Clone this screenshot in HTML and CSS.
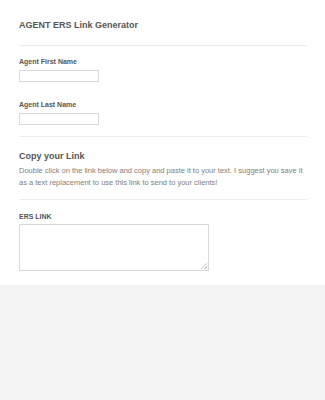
FILE: index.html
```html
<!DOCTYPE html>
<html lang="en">
  <head>
    <meta charset="UTF-8" />
    <meta name="viewport" content="width=device-width, initial-scale=1.0" />
    <title>AGENT ERS Link Generator</title>
    <link rel="stylesheet" href="styles.css">
  </head>
  <body>
    <div class="form-all">
      <div class="form-section">
        <h1 class="form-header">AGENT ERS Link Generator</h1>
        <hr class="divider" />

        <div class="form-line">
          <label class="form-label" for="first_name">Agent First Name</label>
          <input type="text" class="form-textbox" id="first_name" />
        </div>

        <div class="form-line form-line-next">
          <label class="form-label" for="last_name">Agent Last Name</label>
          <input type="text" class="form-textbox" id="last_name" />
        </div>

        <hr class="divider" />

        <!--copy link---------------------------------------------------->
        <div class="form-subheader">
          <h2>Copy your Link</h2>
          <p>
            Double click on the link below and copy and paste it to your text. I suggest you save it
            as a text replacement to use this link to send to your clients!
          </p>
        </div>

        <hr class="divider" />

        <div class="form-line form-line-last">
          <label class="form-label form-label-tight" for="ers_link">ERS LINK</label>
          <textarea class="form-textarea" id="ers_link"></textarea>
        </div>
      </div>
    </div>
  </body>
</html>
```

FILE: styles.css
```css
html,
body {
  margin: 0;
  padding: 0;
  background: #f3f3f3;
}
body {
  font-family: "Liberation Sans", arial, sans-serif;
  color: #555;
}
.form-all {
  background: #fff;
  padding: 0 18px 14px 19px;
}
.form-section {
  display: flex;
  flex-direction: column;
  padding-top: 18px;
}
.form-header {
  margin: 0;
  font-size: 9px;
  font-weight: 700;
  line-height: 14px;
  color: #555;
}

/* dividers and the space round them */
.divider {
  width: 100%;
  border: 0;
  border-top: 1px solid #ececec;
  margin: 13px 0 0;
}
.divider + .form-line {
  margin-top: 11px;
}
.form-line.form-line-next {
  margin-top: 18px;
}
.form-line-next + .divider {
  margin-top: 11px;
}
.divider + .form-subheader {
  margin-top: 12px;
}
.form-subheader + .divider {
  margin-top: 10px;
}
.divider + .form-line-last {
  margin-top: 12px;
}

/* fields */
.form-line {
  display: flex;
  flex-direction: column;
  align-items: flex-start;
}
.form-label {
  font-size: 7px;
  font-weight: 700;
  line-height: 10px;
  margin-bottom: 3px;
}
.form-label-tight {
  margin-bottom: 2px;
}
.form-textbox {
  box-sizing: border-box;
  width: 80px;
  height: 12px;
  border: 1px solid #d9d9d9;
  padding: 0;
  margin: 0;
  background: #fff;
}
.form-textarea {
  box-sizing: border-box;
  width: 190px;
  height: 47px;
  border: 1px solid #d9d9d9;
  padding: 0;
  margin: 0;
  resize: none;
  background: #fff
    linear-gradient(
      135deg,
      transparent 0 45%,
      #c8c8c8 45% 58%,
      transparent 58% 72%,
      #c8c8c8 72% 85%,
      transparent 85%
    )
    no-repeat right 1px bottom 1px / 6px 6px;
}
.form-subheader h2 {
  margin: 0;
  font-size: 9px;
  font-weight: 700;
  line-height: 14px;
}
.form-subheader p {
  margin: 2px 0 0;
  font-size: 7.5px;
  line-height: 12px;
  color: #808080;
}
```
